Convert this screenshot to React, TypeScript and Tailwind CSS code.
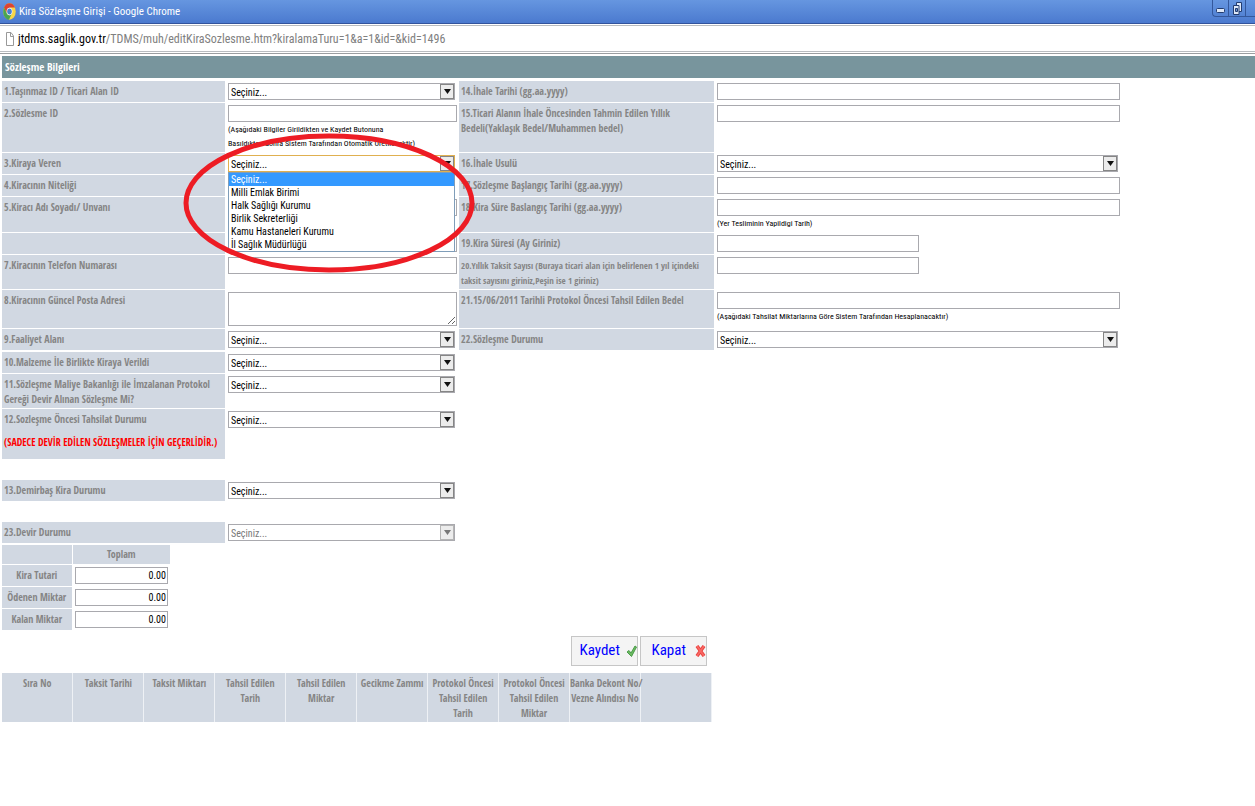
import type { ReactNode } from "react";
import clsx from "clsx";

const columns = [
  ["Sıra No"],
  ["Taksit Tarihi"],
  ["Taksit Miktarı"],
  ["Tahsil Edilen", "Tarih"],
  ["Tahsil Edilen", "Miktar"],
  ["Gecikme Zammı"],
  ["Protokol Öncesi", "Tahsil Edilen", "Tarih"],
  ["Protokol Öncesi", "Tahsil Edilen", "Miktar"],
  ["Banka Dekont No/", "Vezne Alındısı No"],
  [],
];

const totals = ["Kira Tutari", "Ödenen Miktar", "Kalan Miktar"];

const owners = [
  "Seçiniz...",
  "Milli Emlak Birimi",
  "Halk Sağlığı Kurumu",
  "Birlik Sekreterliği",
  "Kamu Hastaneleri Kurumu",
  "İl Sağlık Müdürlüğü",
];

function Row({ children, className }: { children: ReactNode; className?: string }) {
  return (
    <div
      className={clsx(
        "grid grid-cols-[minmax(0,223fr)_minmax(0,230fr)_minmax(0,255fr)_minmax(0,539fr)] gap-x-[2px]",
        className || "min-h-[21px]"
      )}
    >
      {children}
    </div>
  );
}

function Label({ id, small, children }: { id?: string; small?: boolean; children?: ReactNode }) {
  return (
    <label
      htmlFor={id}
      className={clsx(
        "block bg-[#d1d8e2] pt-[3px] pl-[2px] font-['Open_Sans_Condensed','Roboto_Condensed',sans-serif] leading-[15px] font-bold text-[#858585]",
        small ? "text-[9px]" : "text-[10px]"
      )}
    >
      {children}
    </label>
  );
}

function Cell({ children, wide }: { children?: ReactNode; wide?: boolean }) {
  return <div className={clsx("relative pt-[2px]", wide ? "pr-[25%] pl-px" : "pl-px")}>{children}</div>;
}

function TextBox({ id, half }: { id: string; half?: boolean }) {
  return (
    <input
      id={id}
      type="text"
      className={clsx(
        "block h-[17px] border border-[#a9a9ae] bg-white px-[2px] text-[10px] outline-none",
        half ? "w-1/2" : "w-full"
      )}
    />
  );
}

function SelectBox({
  id,
  disabled,
  focused,
  options = ["Seçiniz..."],
}: {
  id: string;
  disabled?: boolean;
  focused?: boolean;
  options?: string[];
}) {
  return (
    <div className="relative mr-[2px]">
      <select
        id={id}
        disabled={disabled}
        className={clsx(
          "block h-[17px] w-full appearance-none border bg-white pt-[2px] pl-[2px] text-[10px] leading-[13px] outline-none",
          focused ? "border-[#e0b050]" : "border-[#a9a9ae]",
          disabled ? "text-[#777] opacity-100" : "text-black"
        )}
      >
        {options.map((o) => (
          <option key={o}>{o}</option>
        ))}
      </select>
      <span
        className={clsx(
          "pointer-events-none absolute top-px right-px flex h-[15px] w-[14px] items-center justify-center border bg-[#ececec]",
          disabled ? "border-[#b5b5b5]" : "border-[#858585]"
        )}
      >
        <svg width="7" height="5" viewBox="0 0 7 5">
          <path d="M0 0h7L3.5 5z" fill={disabled ? "#777" : "#111"} />
        </svg>
      </span>
    </div>
  );
}

function Hint({ children }: { children: ReactNode }) {
  return <p className="pt-px text-[8px] leading-[14px] whitespace-nowrap text-black">{children}</p>;
}

function TitleBar() {
  return (
    <header className="flex h-6 items-center justify-between border-b border-[#32539c] bg-linear-to-b from-[#6696e0] to-[#4b7acf]">
      <div className="flex items-center gap-[3px] pl-[3px]">
        <svg width="13" height="17" viewBox="0 0 26 26" preserveAspectRatio="none">
          <circle cx="13" cy="13" r="12.5" fill="#f8d648" />
          <path d="M2 7A12.5 12.5 0 0 1 24 7H13l-6 8z" fill="#dc4333" />
          <path d="M2 7a12.5 12.5 0 0 0 10 18.5L17.5 16 13 19l-5-3z" fill="#4aa553" />
          <circle cx="13" cy="13" r="5.8" fill="#fff" />
          <circle cx="13" cy="13" r="4.6" fill="#4a7fd0" />
        </svg>
        <h1 className="text-[11px] leading-[20px] text-white">Kira Sözleşme Girişi - Google Chrome</h1>
      </div>
      <div className="flex h-[17px] self-start rounded-bl-sm border-b border-l border-[#34589c]">
        <button
          aria-label="Simge durumuna küçült"
          className="flex w-4 items-center justify-center border-r border-[#34589c]"
        >
          <svg width="9" height="5" viewBox="0 0 9 5" className="mt-1">
            <rect x=".5" y=".5" width="8" height="4" rx="1" fill="#dfe9f8" stroke="#223c70" />
          </svg>
        </button>
        <button
          aria-label="Önceki boyut"
          className="flex w-[17px] items-center justify-center border-r border-[#34589c]"
        >
          <svg width="9" height="13" viewBox="0 0 9 13">
            <path d="M3.5.5h5v9h-5z" fill="#dfe9f8" stroke="#223c70" />
            <path d="M.5 3.5H6v9H.5z" fill="#dfe9f8" stroke="#223c70" />
            <path d="M2.5 6.5h2v3h-2z" fill="#6c93d4" stroke="#223c70" />
          </svg>
        </button>
        <span className="w-[9px]" />
      </div>
    </header>
  );
}

function AddressBar() {
  return (
    <div className="mt-px flex h-[27px] items-center gap-[4px] border-y border-[#b9bcc0] pl-[6px]">
      <svg width="8" height="14" viewBox="0 0 8 14">
        <path d="M.5.5H5L7.5 4v9.5h-7z" fill="#fff" stroke="#999" />
        <path d="M4.5.5v4h3" fill="none" stroke="#999" />
      </svg>
      <p className="text-[12px] leading-[20px] text-[#808080]">
        <span className="text-black">jtdms.saglik.gov.tr</span>
        /TDMS/muh/editKiraSozlesme.htm?kiralamaTuru=1&amp;a=1&amp;id=&amp;kid=1496
      </p>
    </div>
  );
}

export default function App() {
  return (
    <div className="min-h-screen overflow-x-hidden bg-white font-['Roboto_Condensed','Roboto',sans-serif]">
      <TitleBar />
      <AddressBar />
      <main className="mt-px border-t border-[#9b9ea1] pt-[2px] pl-[2px]">
        <h2 className="h-[22px] bg-[#78959d] pl-[3px] font-['Open_Sans_Condensed','Roboto_Condensed',sans-serif] text-[11px] leading-[22px] font-bold text-white">
          Sözleşme Bilgileri
        </h2>

        <form className="mt-[3px] flex flex-col gap-px">
          <Row>
            <Label id="f1">1.Taşınmaz ID / Ticari Alan ID</Label>
            <Cell><SelectBox id="f1" /></Cell>
            <Label id="f14">14.İhale Tarihi (gg.aa.yyyy)</Label>
            <Cell wide><TextBox id="f14" /></Cell>
          </Row>
          <Row className="min-h-[49px]">
            <Label id="f2">2.Sözlesme ID</Label>
            <Cell>
              <TextBox id="f2" />
              <Hint>
                (Aşağıdaki Bilgiler Girildikten ve Kaydet Butonuna
                <br />
                Basıldıktan Sonra Sistem Tarafından Otomatik Üretilecektir)
              </Hint>
            </Cell>
            <Label id="f15">
              15.Ticari Alanın İhale Öncesinden Tahmin Edilen Yıllık
              <br />
              Bedeli(Yaklaşık Bedel/Muhammen bedel)
            </Label>
            <Cell wide><TextBox id="f15" /></Cell>
          </Row>
          <Row>
            <Label id="f3">3.Kiraya Veren</Label>
            <Cell>
              <SelectBox id="f3" focused options={owners} />
              <ul
                role="listbox"
                aria-label="Kiraya Veren"
                className="absolute top-[19px] right-[2px] left-px z-10 border border-[#7f9db9] bg-white text-[10px] leading-[13px] text-black"
              >
                {owners.map((o, i) => (
                  <li
                    key={o}
                    role="option"
                    aria-selected={i === 0}
                    className={clsx("pl-[2px]", i === 0 && "bg-[#3399ff] text-white")}
                  >
                    {o}
                  </li>
                ))}
              </ul>
              <svg
                className="pointer-events-none absolute -top-5 -left-11 z-20"
                width="292"
                height="140"
                viewBox="0 0 292 140"
              >
                <ellipse cx="146" cy="70" rx="143" ry="67" fill="none" stroke="#ed1c24" strokeWidth="5" />
              </svg>
            </Cell>
            <Label id="f16">16.İhale Usulü</Label>
            <Cell wide><SelectBox id="f16" /></Cell>
          </Row>
          <Row>
            <Label id="f4">4.Kiracının Niteliği</Label>
            <Cell><SelectBox id="f4" /></Cell>
            <Label id="f17">17.Sözleşme Başlangıç Tarihi (gg.aa.yyyy)</Label>
            <Cell wide><TextBox id="f17" /></Cell>
          </Row>
          <Row className="min-h-[35px]">
            <Label id="f5">5.Kiracı Adı Soyadı/ Unvanı</Label>
            <Cell><TextBox id="f5" /></Cell>
            <Label id="f18">18.Kira Süre Baslangıç Tarihi (gg.aa.yyyy)</Label>
            <Cell wide>
              <TextBox id="f18" />
              <Hint>(Yer Tesliminin Yapildigi Tarih)</Hint>
            </Cell>
          </Row>
          <Row>
            <Label id="f6" />
            <Cell><TextBox id="f6" /></Cell>
            <Label id="f19">19.Kira Süresi (Ay Giriniz)</Label>
            <Cell wide><TextBox id="f19" half /></Cell>
          </Row>
          <Row className="min-h-[34px]">
            <Label id="f7">7.Kiracının Telefon Numarası</Label>
            <Cell><TextBox id="f7" /></Cell>
            <Label id="f20" small>
              20.Yıllık Taksit Sayısı (Buraya ticari alan için belirlenen 1 yıl içindeki
              <br />
              taksit sayısını giriniz,Peşin ise 1 giriniz)
            </Label>
            <Cell wide><TextBox id="f20" half /></Cell>
          </Row>
          <Row className="min-h-[38px]">
            <Label id="f8">8.Kiracının Güncel Posta Adresi</Label>
            <Cell>
              <textarea
                id="f8"
                className="block h-[34px] w-full resize border border-[#a9a9ae] bg-white px-[2px] text-[10px] outline-none"
              />
            </Cell>
            <Label id="f21">21.15/06/2011 Tarihli Protokol Öncesi Tahsil Edilen Bedel</Label>
            <Cell wide>
              <TextBox id="f21" />
              <Hint>(Aşağıdaki Tahsilat Miktarlarına Göre Sistem Tarafından Hesaplanacaktır)</Hint>
            </Cell>
          </Row>
          <Row>
            <Label id="f9">9.Faaliyet Alanı</Label>
            <Cell><SelectBox id="f9" /></Cell>
            <Label id="f22">22.Sözleşme Durumu</Label>
            <Cell wide><SelectBox id="f22" /></Cell>
          </Row>
          <Row className="mt-px min-h-[21px]">
            <Label id="f10">10.Malzeme İle Birlikte Kiraya Verildi</Label>
            <Cell><SelectBox id="f10" /></Cell>
          </Row>
          <Row className="min-h-[34px]">
            <Label id="f11">
              11.Sözleşme Maliye Bakanlığı ile İmzalanan Protokol
              <br />
              Gereği Devir Alınan Sözleşme Mi?
            </Label>
            <Cell><SelectBox id="f11" /></Cell>
          </Row>
          <Row className="min-h-[50px]">
            <Label id="f12">
              12.Sozleşme Öncesi Tahsilat Durumu
              <span className="mt-2 block whitespace-nowrap text-[#ff0000]">
                (SADECE DEVİR EDİLEN SÖZLEŞMELER İÇİN GEÇERLİDİR.)
              </span>
            </Label>
            <Cell><SelectBox id="f12" /></Cell>
          </Row>
          <Row className="mt-5 min-h-[21px]">
            <Label id="f13">13.Demirbaş Kira Durumu</Label>
            <Cell><SelectBox id="f13" /></Cell>
          </Row>
          <Row className="mt-5 min-h-[21px]">
            <Label id="f23">23.Devir Durumu</Label>
            <Cell><SelectBox id="f23" disabled /></Cell>
          </Row>
        </form>

        <table className="mt-[2px] w-[168px] table-fixed border-collapse font-['Open_Sans_Condensed','Roboto_Condensed',sans-serif] text-[10px] leading-[15px] text-[#858585]">
          <thead>
            <tr className="h-[19px] border-b border-white bg-[#d1d8e2]">
              <td className="w-[70px] border-r border-white p-0" />
              <th className="p-0">Toplam</th>
            </tr>
          </thead>
          <tbody>
            {totals.map((t, i) => (
              <tr key={t} className="h-[22px] border-b border-white">
                <th className="border-r border-white bg-[#d1d8e2] p-0">
                  <label htmlFor={`total-${i}`}>{t}</label>
                </th>
                <td className="px-[2px] py-0">
                  <input
                    id={`total-${i}`}
                    defaultValue="0.00"
                    className="block h-[17px] w-full border border-[#a9a9ae] bg-white px-px text-right font-['Roboto_Condensed','Roboto',sans-serif] text-[10px] text-black outline-none"
                  />
                </td>
              </tr>
            ))}
          </tbody>
        </table>

        <div className="mt-[5px] flex justify-center gap-[2px] pl-5">
          <button className="flex h-[30px] w-[67px] items-center justify-between border border-[#c6c6c6] bg-[#f4f4f4] pl-2 text-[15px] text-[#0000ff]">
            Kaydet
            <svg width="11" height="14" viewBox="0 0 11 14" className="shrink-0">
              <path d="M1 8l2-1.5L5 9l4-7 1.5 1-5 9.5z" fill="#6cba60" stroke="#4b9c4a" />
            </svg>
          </button>
          <button className="flex h-[30px] w-[67px] items-center justify-between border border-[#c6c6c6] bg-[#f4f4f4] pl-[11px] text-[15px] text-[#0000ff]">
            Kapat
            <svg width="11" height="14" viewBox="0 0 11 14" className="shrink-0">
              <path d="m2 2 7 10M9 2 2 12" stroke="#e8433f" strokeWidth="3.5" />
              <path d="m2 2 7 10M9 2 2 12" stroke="#fa6a66" strokeWidth="1.5" />
            </svg>
          </button>
        </div>

        <table className="mt-[7px] w-[710px] table-fixed border-collapse font-['Open_Sans_Condensed','Roboto_Condensed',sans-serif] text-[10px] leading-[15px] text-[#858585]">
          <thead>
            <tr className="h-[49px] bg-[#d1d8e2] align-top">
              {columns.map((lines, i) => (
                <th key={i} className="border-r border-[#eef1f5] px-0 pt-[3px] pb-0 whitespace-nowrap">
                  {lines.map((line) => (
                    <span key={line} className="block">{line}</span>
                  ))}
                </th>
              ))}
            </tr>
          </thead>
        </table>
      </main>
    </div>
  );
}
